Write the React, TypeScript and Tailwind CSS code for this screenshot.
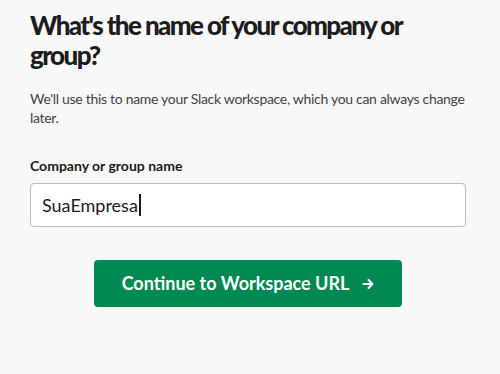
export default function App() {
	return (
		<div
			className="min-h-[374px] w-full bg-[#f8f8f8] text-[#1d1c1d]"
			style={{ fontFamily: "Lato, 'Noto Sans', sans-serif" }}
		>
			<div className="w-[436px] ml-[30px] pt-[10px]">
				<h1 className="text-[26px] font-black leading-[30px] tracking-[-1.6px]">
					What's the name of your company or group?
				</h1>
				<p className="mt-[19px] text-[14px] leading-[19px] tracking-[-0.3px] text-[#454245]">
					We'll use this to name your Slack workspace, which you can always change later.
				</p>
				<label className="mt-[30px] block text-[14px] font-bold leading-[18px] text-[#1d1c1d]">
					Company or group name
				</label>
				<div className="mt-[8px] flex h-[44px] items-center rounded-[4px] border border-[#bdbdbd] bg-white px-[11px]">
					<span className="text-[18px] leading-none text-[#1d1c1d]">SuaEmpresa</span>
					<span className="ml-px h-[22px] w-[2px] bg-[#1d1c1d]" />
				</div>
				<div className="mt-[33px] flex justify-center">
					<button className="flex h-[47px] w-[308px] items-center justify-center gap-[13px] rounded-[4px] bg-[#008952] text-[18px] font-bold text-white">
						<span>Continue to Workspace URL</span>
						<svg width="12" height="12" viewBox="0 0 12 12" fill="none" stroke="white" strokeWidth="2" strokeLinecap="round" strokeLinejoin="round">
							<path d="M1.5 6h9M6.5 2l4 4-4 4" />
						</svg>
					</button>
				</div>
			</div>
		</div>
	);
}
